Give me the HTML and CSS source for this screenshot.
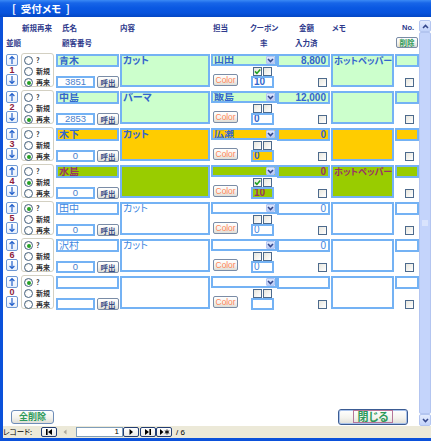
FILE: index.html
```html
<!DOCTYPE html>
<html lang="ja">
<head>
<meta charset="utf-8">
<title>受付メモ</title>
<link rel="stylesheet" href="styles.css">
</head>
<body>
<div class="window">
  <div class="titlebar"><span class="ttl">[&nbsp;&nbsp;受付メモ&nbsp;&nbsp;]</span></div>
  <div class="main">
    <div class="frame">
      <div class="form">
        <div class="header">
          <div class="hline">
            <span class="h h-kind">新規再来</span>
            <span class="h h-name">氏名</span>
            <span class="h h-cont">内容</span>
            <span class="h h-staff">担当</span>
            <span class="h h-coup">クーポン</span>
            <span class="h h-amt">金額</span>
            <span class="h h-memo">メモ</span>
            <span class="h h-no">No.</span>
          </div>
          <div class="hline">
            <span class="h h-sort">並順</span>
            <span class="h h-cust">顧客番号</span>
            <span class="h h-rate">率</span>
            <span class="h h-done">入力済</span>
            <span class="xbtn delbtn">削除</span>
          </div>
        </div>

        <div class="rows">
          <!-- row 1 -->
          <div class="row r-green">
            <div class="c-sort">
              <span class="arr"><svg viewBox="0 0 10 10" width="10" height="10"><path d="M5 1.5V9M2.6 4L5 1.5L7.4 4"/></svg></span>
              <span class="num">1</span>
              <span class="arr"><svg viewBox="0 0 10 10" width="10" height="10"><path d="M5 1V8.5M2.6 6L5 8.5L7.4 6"/></svg></span>
            </div>
            <div class="radios">
              <span class="ro"><i class="rad"></i>?</span>
              <span class="ro"><i class="rad"></i>新規</span>
              <span class="ro"><i class="rad on"></i>再来</span>
            </div>
            <div class="c-name">
              <div class="fld fill name">青木</div>
              <div class="custline"><div class="fld cust">3851</div><span class="xbtn call">呼出</span></div>
            </div>
            <div class="fld fill cont">カット</div>
            <div class="c-staff">
              <div class="fld fill combo"><span class="cv">山田</span><span class="ddb"><svg viewBox="0 0 7 5" width="7" height="5"><path d="M1 1L3.5 3.6L6 1"/></svg></span></div>
              <div class="staff2">
                <span class="xbtn colorbtn">Color</span>
                <div class="coup">
                  <div class="chks"><span class="chk on"><svg viewBox="0 0 7 7" width="7" height="7"><path d="M1 3.4L2.9 5.4L6.2 1.4"/></svg></span><span class="chk"></span></div>
                  <div class="fld rate">10</div>
                </div>
              </div>
            </div>
            <div class="c-amt"><div class="fld fill amt">8,800</div><span class="chk done"></span></div>
            <div class="fld fill memo">ホットペッパー</div>
            <div class="c-no"><div class="fld fill no"></div><span class="chk nochk"></span></div>
          </div>

          <!-- row 2 -->
          <div class="row r-green">
            <div class="c-sort">
              <span class="arr"><svg viewBox="0 0 10 10" width="10" height="10"><path d="M5 1.5V9M2.6 4L5 1.5L7.4 4"/></svg></span>
              <span class="num">2</span>
              <span class="arr"><svg viewBox="0 0 10 10" width="10" height="10"><path d="M5 1V8.5M2.6 6L5 8.5L7.4 6"/></svg></span>
            </div>
            <div class="radios">
              <span class="ro"><i class="rad"></i>?</span>
              <span class="ro"><i class="rad"></i>新規</span>
              <span class="ro"><i class="rad on"></i>再来</span>
            </div>
            <div class="c-name">
              <div class="fld fill name">中島</div>
              <div class="custline"><div class="fld cust">2853</div><span class="xbtn call">呼出</span></div>
            </div>
            <div class="fld fill cont">パーマ</div>
            <div class="c-staff">
              <div class="fld fill combo"><span class="cv">飯島</span><span class="ddb"><svg viewBox="0 0 7 5" width="7" height="5"><path d="M1 1L3.5 3.6L6 1"/></svg></span></div>
              <div class="staff2">
                <span class="xbtn colorbtn">Color</span>
                <div class="coup">
                  <div class="chks"><span class="chk"></span><span class="chk"></span></div>
                  <div class="fld rate">0</div>
                </div>
              </div>
            </div>
            <div class="c-amt"><div class="fld fill amt">12,000</div><span class="chk done"></span></div>
            <div class="fld fill memo"></div>
            <div class="c-no"><div class="fld fill no"></div><span class="chk nochk"></span></div>
          </div>

          <!-- row 3 -->
          <div class="row r-orange">
            <div class="c-sort">
              <span class="arr"><svg viewBox="0 0 10 10" width="10" height="10"><path d="M5 1.5V9M2.6 4L5 1.5L7.4 4"/></svg></span>
              <span class="num">3</span>
              <span class="arr"><svg viewBox="0 0 10 10" width="10" height="10"><path d="M5 1V8.5M2.6 6L5 8.5L7.4 6"/></svg></span>
            </div>
            <div class="radios">
              <span class="ro"><i class="rad"></i>?</span>
              <span class="ro"><i class="rad"></i>新規</span>
              <span class="ro"><i class="rad on"></i>再来</span>
            </div>
            <div class="c-name">
              <div class="fld fill name">木下</div>
              <div class="custline"><div class="fld cust">0</div><span class="xbtn call">呼出</span></div>
            </div>
            <div class="fld fill cont">カット</div>
            <div class="c-staff">
              <div class="fld fill combo"><span class="cv">広瀬</span><span class="ddb"><svg viewBox="0 0 7 5" width="7" height="5"><path d="M1 1L3.5 3.6L6 1"/></svg></span></div>
              <div class="staff2">
                <span class="xbtn colorbtn">Color</span>
                <div class="coup">
                  <div class="chks"><span class="chk"></span><span class="chk"></span></div>
                  <div class="fld fill rate">0</div>
                </div>
              </div>
            </div>
            <div class="c-amt"><div class="fld fill amt">0</div><span class="chk done"></span></div>
            <div class="fld fill memo"></div>
            <div class="c-no"><div class="fld fill no"></div><span class="chk nochk"></span></div>
          </div>

          <!-- row 4 -->
          <div class="row r-lime">
            <div class="c-sort">
              <span class="arr"><svg viewBox="0 0 10 10" width="10" height="10"><path d="M5 1.5V9M2.6 4L5 1.5L7.4 4"/></svg></span>
              <span class="num">4</span>
              <span class="arr"><svg viewBox="0 0 10 10" width="10" height="10"><path d="M5 1V8.5M2.6 6L5 8.5L7.4 6"/></svg></span>
            </div>
            <div class="radios">
              <span class="ro"><i class="rad"></i>?</span>
              <span class="ro"><i class="rad on"></i>新規</span>
              <span class="ro"><i class="rad"></i>再来</span>
            </div>
            <div class="c-name">
              <div class="fld fill name">水島</div>
              <div class="custline"><div class="fld cust">0</div><span class="xbtn call">呼出</span></div>
            </div>
            <div class="fld fill cont"></div>
            <div class="c-staff">
              <div class="fld fill combo"><span class="cv"></span><span class="ddb"><svg viewBox="0 0 7 5" width="7" height="5"><path d="M1 1L3.5 3.6L6 1"/></svg></span></div>
              <div class="staff2">
                <span class="xbtn colorbtn">Color</span>
                <div class="coup">
                  <div class="chks"><span class="chk on"><svg viewBox="0 0 7 7" width="7" height="7"><path d="M1 3.4L2.9 5.4L6.2 1.4"/></svg></span><span class="chk"></span></div>
                  <div class="fld fill rate">10</div>
                </div>
              </div>
            </div>
            <div class="c-amt"><div class="fld fill amt">0</div><span class="chk done"></span></div>
            <div class="fld fill memo">ホットペッパー</div>
            <div class="c-no"><div class="fld fill no"></div><span class="chk nochk"></span></div>
          </div>

          <!-- row 5 -->
          <div class="row r-white">
            <div class="c-sort">
              <span class="arr"><svg viewBox="0 0 10 10" width="10" height="10"><path d="M5 1.5V9M2.6 4L5 1.5L7.4 4"/></svg></span>
              <span class="num">5</span>
              <span class="arr"><svg viewBox="0 0 10 10" width="10" height="10"><path d="M5 1V8.5M2.6 6L5 8.5L7.4 6"/></svg></span>
            </div>
            <div class="radios">
              <span class="ro"><i class="rad on"></i>?</span>
              <span class="ro"><i class="rad"></i>新規</span>
              <span class="ro"><i class="rad"></i>再来</span>
            </div>
            <div class="c-name">
              <div class="fld fill name">田中</div>
              <div class="custline"><div class="fld cust">0</div><span class="xbtn call">呼出</span></div>
            </div>
            <div class="fld fill cont">カット</div>
            <div class="c-staff">
              <div class="fld fill combo"><span class="cv"></span><span class="ddb"><svg viewBox="0 0 7 5" width="7" height="5"><path d="M1 1L3.5 3.6L6 1"/></svg></span></div>
              <div class="staff2">
                <span class="xbtn colorbtn">Color</span>
                <div class="coup">
                  <div class="chks"><span class="chk"></span><span class="chk"></span></div>
                  <div class="fld fill rate">0</div>
                </div>
              </div>
            </div>
            <div class="c-amt"><div class="fld fill amt">0</div><span class="chk done"></span></div>
            <div class="fld fill memo"></div>
            <div class="c-no"><div class="fld fill no"></div><span class="chk nochk"></span></div>
          </div>

          <!-- row 6 -->
          <div class="row r-white">
            <div class="c-sort">
              <span class="arr"><svg viewBox="0 0 10 10" width="10" height="10"><path d="M5 1.5V9M2.6 4L5 1.5L7.4 4"/></svg></span>
              <span class="num">6</span>
              <span class="arr"><svg viewBox="0 0 10 10" width="10" height="10"><path d="M5 1V8.5M2.6 6L5 8.5L7.4 6"/></svg></span>
            </div>
            <div class="radios">
              <span class="ro"><i class="rad on"></i>?</span>
              <span class="ro"><i class="rad"></i>新規</span>
              <span class="ro"><i class="rad"></i>再来</span>
            </div>
            <div class="c-name">
              <div class="fld fill name">沢村</div>
              <div class="custline"><div class="fld cust">0</div><span class="xbtn call">呼出</span></div>
            </div>
            <div class="fld fill cont">カット</div>
            <div class="c-staff">
              <div class="fld fill combo"><span class="cv"></span><span class="ddb"><svg viewBox="0 0 7 5" width="7" height="5"><path d="M1 1L3.5 3.6L6 1"/></svg></span></div>
              <div class="staff2">
                <span class="xbtn colorbtn">Color</span>
                <div class="coup">
                  <div class="chks"><span class="chk"></span><span class="chk"></span></div>
                  <div class="fld fill rate">0</div>
                </div>
              </div>
            </div>
            <div class="c-amt"><div class="fld fill amt">0</div><span class="chk done"></span></div>
            <div class="fld fill memo"></div>
            <div class="c-no"><div class="fld fill no"></div><span class="chk nochk"></span></div>
          </div>

          <!-- row 7 -->
          <div class="row r-white">
            <div class="c-sort">
              <span class="arr"><svg viewBox="0 0 10 10" width="10" height="10"><path d="M5 1.5V9M2.6 4L5 1.5L7.4 4"/></svg></span>
              <span class="num">0</span>
              <span class="arr"><svg viewBox="0 0 10 10" width="10" height="10"><path d="M5 1V8.5M2.6 6L5 8.5L7.4 6"/></svg></span>
            </div>
            <div class="radios">
              <span class="ro"><i class="rad on"></i>?</span>
              <span class="ro"><i class="rad"></i>新規</span>
              <span class="ro"><i class="rad"></i>再来</span>
            </div>
            <div class="c-name">
              <div class="fld fill name"></div>
              <div class="custline"><div class="fld cust"></div><span class="xbtn call">呼出</span></div>
            </div>
            <div class="fld fill cont"></div>
            <div class="c-staff">
              <div class="fld fill combo"><span class="cv"></span><span class="ddb"><svg viewBox="0 0 7 5" width="7" height="5"><path d="M1 1L3.5 3.6L6 1"/></svg></span></div>
              <div class="staff2">
                <span class="xbtn colorbtn">Color</span>
                <div class="coup">
                  <div class="chks"><span class="chk"></span><span class="chk"></span></div>
                  <div class="fld fill rate"></div>
                </div>
              </div>
            </div>
            <div class="c-amt"><div class="fld fill amt"></div><span class="chk done"></span></div>
            <div class="fld fill memo"></div>
            <div class="c-no"><div class="fld fill no"></div><span class="chk nochk"></span></div>
          </div>
        </div>

        <div class="spacer"></div>

        <div class="footer">
          <span class="xbtn allbtn">全削除</span>
          <span class="xbtn closebtn"><span class="focus">閉じる</span></span>
        </div>
      </div>

      <div class="vscroll">
        <span class="sbtn"><svg viewBox="0 0 7 5" width="7" height="5"><path d="M1 4L3.5 1.4L6 4"/></svg></span>
        <span class="thumb"><svg viewBox="0 0 6 7" width="6" height="7"><path d="M0 1H6M0 3H6M0 5H6"/></svg></span>
        <span class="sbtn"><svg viewBox="0 0 7 5" width="7" height="5"><path d="M1 1L3.5 3.6L6 1"/></svg></span>
      </div>
    </div>

    <div class="navbar">
      <span class="navlbl">レコード:</span>
      <span class="nbtn"><svg viewBox="0 0 12 8" width="12" height="8"><path class="fillb" d="M3 1h1.6v6H3z M9 1L5 4L9 7z"/></svg></span>
      <span class="nbtn dis"><svg viewBox="0 0 12 8" width="12" height="8"><path class="fillg" d="M7.5 1.5L4.5 4L7.5 6.5z"/></svg></span>
      <span class="navfld">1</span>
      <span class="nbtn"><svg viewBox="0 0 12 8" width="12" height="8"><path class="fillb" d="M4.5 1L8 4L4.5 7z"/></svg></span>
      <span class="nbtn n-last"><svg viewBox="0 0 12 8" width="12" height="8"><path class="fillb" d="M3 1L7 4L3 7z M7.4 1h1.6v6H7.4z"/></svg></span>
      <span class="nbtn"><svg viewBox="0 0 12 8" width="12" height="8"><path class="fillb" d="M2 1L5.5 4L2 7z"/><path class="strk" d="M9 1.5V6.5M6.8 2.8L11.2 5.2M6.8 5.2L11.2 2.8"/></svg></span>
      <span class="navtot">/ 6</span>
    </div>
  </div>
</div>
</body>
</html>
```

FILE: styles.css
```css
* { box-sizing: border-box; margin: 0; padding: 0; }
html, body { width: 431px; height: 441px; overflow: hidden; background: #fff; }
body {
  font-family: "Liberation Sans", "Noto Sans CJK JP", sans-serif;
  font-size: 9px;
  color: #000;
  font-feature-settings: "palt";
}

.window { width: 431px; height: 441px; display: flex; flex-direction: column; }

.titlebar {
  height: 17px;
  background: linear-gradient(#3B8AF5 0, #1765E8 3px, #0A58E2 8px, #0753DC 13px, #0447C4 17px);
  color: #fff;
  font-family: "Noto Sans CJK JP", sans-serif;
  font-weight: bold;
  font-size: 10.5px;
  line-height: 17px;
  padding-left: 12px;
}

.main {
  flex: 1;
  display: flex;
  flex-direction: column;
  border-left: 3px solid #0B51DA;
  border-bottom: 3px solid #0B51DA;
}

.frame { height: 409px; display: flex; }
.form { flex: 1; display: flex; flex-direction: column; padding-left: 3px; background: #fff; }

/* header */
.header { padding-top: 5px; height: 36px; display: flex; flex-direction: column; gap: 4px; }
.hline { display: flex; height: 11px; align-items: center; }
.h {
  font-family: "Noto Sans CJK JP", sans-serif;
  font-size: 7.5px;
  font-weight: bold;
  color: #2E3A8C;
  line-height: 11px;
  white-space: nowrap;
  flex-shrink: 0;
}
.h-kind { margin-left: 16px; width: 40px; }
.h-name { width: 58px; }
.h-cont { width: 93px; }
.h-staff { width: 37px; }
.h-coup { width: 49px; }
.h-amt { width: 33px; }
.h-memo { width: 70px; }
.h-no { font-family: "Liberation Sans", sans-serif; }
.h-sort { margin-left: 0; width: 56px; }
.h-cust { width: 198px; }
.h-rate { width: 35px; }
.h-done { width: 101px; }

/* buttons */
.xbtn {
  display: flex;
  align-items: center;
  justify-content: center;
  border: 1px solid #7A8CA6;
  border-radius: 2px;
  background: linear-gradient(#FFFFFF, #F4F3EE 55%, #DEDDD6);
  font-family: "Noto Sans CJK JP", sans-serif;
  white-space: nowrap;
  flex-shrink: 0;
}
.delbtn { width: 22px; height: 11px; font-size: 7.5px; font-weight: bold; color: #2E9A5A; line-height: 9px; }

/* rows */
.rows { display: flex; flex-direction: column; }
.row {
  height: 37px;
  display: grid;
  grid-template-columns: 15px 35px 64px 91px 66px 54px 64px 24px;
  align-items: start;
}
.r-green { --fill: #CCFFCC; --tc: #3366CC; --fw: bold; }
.r-orange { --fill: #FFCC00; --tc: #3366CC; --fw: bold; }
.r-lime { --fill: #99CC00; --tc: #993366; --fw: bold; }
.r-white { --fill: #FFFFFF; --tc: #3D86E0; --fw: normal; }

.c-sort { display: flex; flex-direction: column; align-items: flex-start; padding-top: 1px; width: 12px; }
.arr {
  width: 12px; height: 12px;
  border: 1px solid #6E98D4;
  border-radius: 2px;
  background: linear-gradient(#FFFFFF, #E6EEFA);
  display: flex; align-items: center; justify-content: center;
}
.arr svg path { fill: none; stroke: #2461CC; stroke-width: 1.2; }
.num {
  height: 8px; width: 12px;
  text-align: center;
  font-size: 9px;
  font-weight: bold;
  line-height: 8px;
  color: #8E1B3C;
}

.radios {
  width: 33px; height: 34px;
  border: 1px solid #D3D0C2;
  border-radius: 3px;
  padding: 1px 0 0 2px;
  display: flex; flex-direction: column;
}
.ro {
  height: 11px;
  display: flex; align-items: center; gap: 3px;
  font-family: "Noto Sans CJK JP", sans-serif;
  font-size: 7px; font-weight: bold; color: #333;
  line-height: 11px;
}
.rad {
  width: 9px; height: 9px;
  border: 1px solid #46627F;
  border-radius: 50%;
  background: radial-gradient(circle at 60% 60%, #FFFFFF 40%, #E4E2D8);
  display: flex; align-items: center; justify-content: center;
}
.rad.on::after {
  content: "";
  width: 4px; height: 4px;
  border-radius: 50%;
  background: #25A125;
}

.fld {
  border: 2px solid #74B2F4;
  background: #fff;
  color: var(--tc);
  font-weight: var(--fw);
  font-family: "Liberation Sans", "Noto Sans CJK JP", sans-serif;
  font-size: 10px;
  line-height: 9px;
  overflow: hidden;
  white-space: nowrap;
}
.fld.fill { background: var(--fill); }

.c-name { display: flex; flex-direction: column; padding-top: 1px; }
.name { width: 63px; height: 13px; padding-left: 1px; }
.custline { display: flex; gap: 2px; margin-top: 9px; }
.cust {
  width: 39px; height: 12px;
  text-align: center;
  font-weight: normal; color: #4B7FCC; font-size: 9.5px; line-height: 8px;
}
.call { width: 22px; height: 12px; font-size: 7.5px; font-weight: bold; color: #3A4E86; }

.cont { margin-top: 1px; width: 90px; height: 33px; padding-left: 1px; }

.c-staff { display: flex; flex-direction: column; padding-top: 1px; width: 66px; }
.combo { width: 66px; height: 12px; display: flex; align-items: stretch; padding-left: 1px; }
.cv { flex: 1; line-height: 8px; }
.ddb {
  width: 9px; margin-right: 0;
  background: linear-gradient(#DCE6FC, #B9CCF8);
  border: 1px solid #B4C6F2;
  border-radius: 1px;
  display: flex; align-items: center; justify-content: center;
}
.ddb svg path, .sbtn svg path { fill: none; stroke: #34478A; stroke-width: 1.5; }

.staff2 { display: flex; margin-top: 1px; }
.colorbtn {
  margin-left: 2px; margin-top: 7px;
  width: 25px; height: 12px;
  font-family: "Liberation Sans", sans-serif;
  font-size: 8.5px; color: #FF875A;
  letter-spacing: -0.1px;
}
.coup { display: flex; flex-direction: column; margin-left: 13px; }
.chks { display: flex; gap: 1px; margin-left: 2px; }
.chk {
  width: 9px; height: 9px;
  border: 1px solid #4D6A8C;
  background: linear-gradient(135deg, #E8E6DD, #FFFFFF);
  display: flex; align-items: center; justify-content: center;
}
.chk svg path { fill: none; stroke: #21A121; stroke-width: 1.6; }
.rate { width: 23px; height: 12px; padding-left: 1px; line-height: 8px; }

.c-amt { display: flex; flex-direction: column; padding-top: 1px; }
.amt { width: 53px; height: 13px; text-align: right; padding-right: 2px; }
.done { margin-top: 11px; margin-left: 41px; }

.memo { margin-top: 1px; width: 63px; height: 33px; padding-left: 1px; font-family: "Noto Sans CJK JP", sans-serif; font-size: 9px; }

.c-no { display: flex; flex-direction: column; padding-top: 1px; }
.no { width: 24px; height: 13px; }
.nochk { margin-top: 11px; margin-left: 10px; }

.spacer { flex: 1; }

.footer { height: 17px; padding-bottom: 2px; display: flex; align-items: center; }
.allbtn {
  margin-left: 5px; width: 43px; height: 14px;
  font-size: 9px; font-weight: bold; color: #2E9A5A;
  border-color: #6E8DB8; border-radius: 3px;
}
.closebtn {
  margin-left: auto; margin-right: 11px;
  width: 70px; height: 16px;
  border: 1px solid #3B5C93; border-radius: 3px;
  box-shadow: inset 0 0 0 1px #A9C2EA;
}
.focus {
  outline: 1px solid #B5769A;
  padding: 0 3px;
  font-size: 11px; font-weight: bold; color: #2E9A5A;
  line-height: 11px;
}

/* scrollbar */
.vscroll { width: 12px; display: flex; flex-direction: column; padding-top: 3px; background: #fff; }
.sbtn {
  height: 12px;
  border: 1px solid #B3C5F0;
  border-radius: 2px;
  background: linear-gradient(#E3EBFD, #C2D3FA);
  display: flex; align-items: center; justify-content: center;
}
.thumb {
  flex: 1;
  border: 1px solid #B3C5F0;
  border-radius: 2px;
  background: #C4D4FB;
  display: flex; align-items: center; justify-content: center;
}
.thumb svg path { stroke: #EEF3FE; stroke-width: 1; }

/* navigation bar */
.navbar {
  height: 12px;
  background: #ECE9D8;
  display: flex;
  align-items: center;
  font-family: "Noto Sans CJK JP", sans-serif;
  font-size: 7.5px;
}
.navlbl { width: 38px; line-height: 12px; color: #000; white-space: nowrap; }
.nbtn {
  width: 16px; height: 10px;
  border: 1px solid #233E73;
  border-radius: 2px;
  background: linear-gradient(#FFFFFF, #ECEBE6);
  display: flex; align-items: center; justify-content: center;
}
.nbtn.dis { border-color: transparent; background: transparent; margin-right: 3px; }
.n-last { margin-left: 1px; }
.fillb { fill: #000; }
.fillg { fill: #ACA899; }
.strk { fill: none; stroke: #000; stroke-width: 1; }
.navfld {
  width: 47px; height: 10px;
  border: 1px solid #7F9DB9;
  background: #fff;
  text-align: right;
  padding-right: 3px;
  font-family: "Liberation Sans", sans-serif;
  font-size: 8px;
  line-height: 8px;
}
.navtot { margin-left: 4px; font-family: "Liberation Sans", sans-serif; font-size: 8px; color: #000; }
```
